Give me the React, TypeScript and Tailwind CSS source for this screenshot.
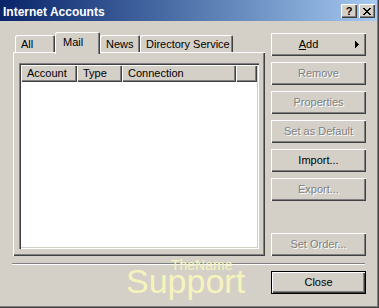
import React from "react";

const raised =
  "shadow-[inset_1px_1px_#ffffff,inset_-1px_-1px_#404040,inset_-2px_-2px_#808080]";

function Btn({
  children,
  disabled,
  extra = "",
}: {
  children: React.ReactNode;
  disabled?: boolean;
  extra?: string;
}) {
  return (
    <div
      className={`relative h-[23px] w-[95px] shrink-0 flex items-center justify-center bg-[#d4d0c8] text-[11px] leading-[13px] ${raised} ${
        disabled ? "text-[#808080] [text-shadow:1px_1px_0_#ffffff]" : "text-black"
      } ${extra}`}
    >
      {children}
    </div>
  );
}

function Tab({
  label,
  w,
  selected,
}: {
  label: string;
  w: string;
  selected?: boolean;
}) {
  return (
    <div
      className={`${w} ${
        selected
          ? "h-[22px] -mb-[2px] relative z-10 pl-[8px] pt-[4px]"
          : "h-[17px] pl-[6px] pt-[3px]"
      } shrink-0 bg-[#d4d0c8] rounded-t-[2px] text-[11px] leading-[13px] text-black shadow-[inset_1px_1px_#ffffff,inset_-1px_0_#404040,inset_-2px_0_#808080]`}
    >
      {label}
    </div>
  );
}

function HeadCell({ label, w }: { label: string; w: string }) {
  return (
    <div
      className={`${w} h-[17px] shrink-0 bg-[#d4d0c8] pl-[6px] flex items-center text-[11px] leading-[13px] text-black shadow-[inset_1px_1px_#ffffff,inset_-1px_-1px_#404040,inset_-2px_-2px_#808080]`}
    >
      {label}
    </div>
  );
}

export default function App() {
  return (
    <div
      className="relative w-[379px] h-[308px] bg-[#d4d0c8] pr-[2px] pb-[2px] overflow-hidden shadow-[inset_-1px_-1px_#404040,inset_-2px_-2px_#808080]"
      style={{ fontFamily: '"Liberation Sans", Arial, sans-serif' }}
    >
      {/* Title bar */}
      <div className="h-[21px] w-full flex items-center justify-between pl-[3px] pr-[2px] bg-linear-to-r from-[#0a246a] to-[#a6caf0]">
        <div className="text-white font-bold text-[12px] leading-[14px] pt-[2px]">
          Internet Accounts
        </div>
        <div className="flex gap-[2px] pt-[1px]">
          <div
            className={`w-[16px] h-[14px] bg-[#d4d0c8] flex items-center justify-center text-black font-bold text-[11px] leading-[11px] ${raised}`}
          >
            ?
          </div>
          <div
            className={`w-[16px] h-[14px] bg-[#d4d0c8] flex items-center justify-center ${raised}`}
          >
            <svg width="8" height="7" viewBox="0 0 8 7" shapeRendering="crispEdges">
              <path
                d="M0 0h2v1H0zM6 0h2v1H6zM1 1h2v1H1zM5 1h2v1H5zM2 2h4v1H2zM3 3h2v1H3zM2 4h4v1H2zM1 5h2v1H1zM5 5h2v1H5zM0 6h2v1H0zM6 6h2v1H6z"
                fill="#000"
              />
            </svg>
          </div>
        </div>
      </div>

      {/* Body */}
      <div className="flex flex-col pl-[13px] pt-[11px]">
        <div className="flex gap-[6px]">
          {/* Left: tabs + panel */}
          <div className="flex flex-col w-[252px]">
            <div className="flex items-end h-[20px] pl-[2px]">
              <Tab label="All" w="w-[40px]" />
              <Tab label="Mail" w="w-[45px]" selected />
              <Tab label="News" w="w-[40px]" />
              <Tab label="Directory Service" w="w-[93px]" />
            </div>
            <div className="w-[252px] h-[204px] bg-[#d4d0c8] pt-[11px] pl-[6px] shadow-[inset_1px_1px_#ffffff,inset_-1px_-1px_#404040,inset_-2px_-2px_#808080]">
              <div className="w-[240px] h-[186px] bg-white p-[2px] shadow-[inset_1px_1px_#808080,inset_2px_2px_#404040,inset_-1px_-1px_#ffffff,inset_-2px_-2px_#d4d0c8]">
                <div className="flex">
                  <HeadCell label="Account" w="w-[56px]" />
                  <HeadCell label="Type" w="w-[45px]" />
                  <HeadCell label="Connection" w="w-[114px]" />
                  <HeadCell label="" w="w-[21px]" />
                </div>
              </div>
            </div>
          </div>

          {/* Right: buttons */}
          <div className="flex flex-col w-[95px] mt-[1px] h-[223px]">
            <div className="flex flex-col gap-[6px]">
              <Btn extra="pr-[20px]">
                <span>
                  <span className="underline">A</span>dd
                </span>
                <svg
                  className="absolute right-[7px] top-[8px]"
                  width="4"
                  height="7"
                  viewBox="0 0 4 7"
                  shapeRendering="crispEdges"
                >
                  <path d="M0 0h1v7H0zM1 1h1v5H1zM2 2h1v3H2zM3 3h1v1H3z" fill="#000" />
                </svg>
              </Btn>
              <Btn disabled>Remove</Btn>
              <Btn disabled>Properties</Btn>
              <Btn disabled>Set as Default</Btn>
              <Btn>Import...</Btn>
              <Btn disabled>Export...</Btn>
            </div>
            <div className="mt-auto">
              <Btn disabled>Set Order...</Btn>
            </div>
          </div>
        </div>

        {/* Separator */}
        <div className="mt-[7px] -ml-[1px] w-[353px] h-[2px] border-t border-[#808080] border-b border-b-white" />

        {/* Close */}
        <div className="mt-[6px] ml-[258px]">
          <Btn extra="border border-black">Close</Btn>
        </div>
      </div>

      {/* Watermark */}
      <div
        className="absolute left-[171px] top-[258px] text-[14px] leading-[14px] text-[#f6f4bc] pointer-events-none"
        style={{ fontFamily: '"Liberation Sans", Arial, sans-serif' }}
      >
        TheName
      </div>
      <div
        className="absolute left-[126px] top-[264px] text-[34px] leading-[34px] text-[#f6f4bc] pointer-events-none"
        style={{ fontFamily: '"Liberation Sans", Arial, sans-serif' }}
      >
        Support
      </div>
    </div>
  );
}
